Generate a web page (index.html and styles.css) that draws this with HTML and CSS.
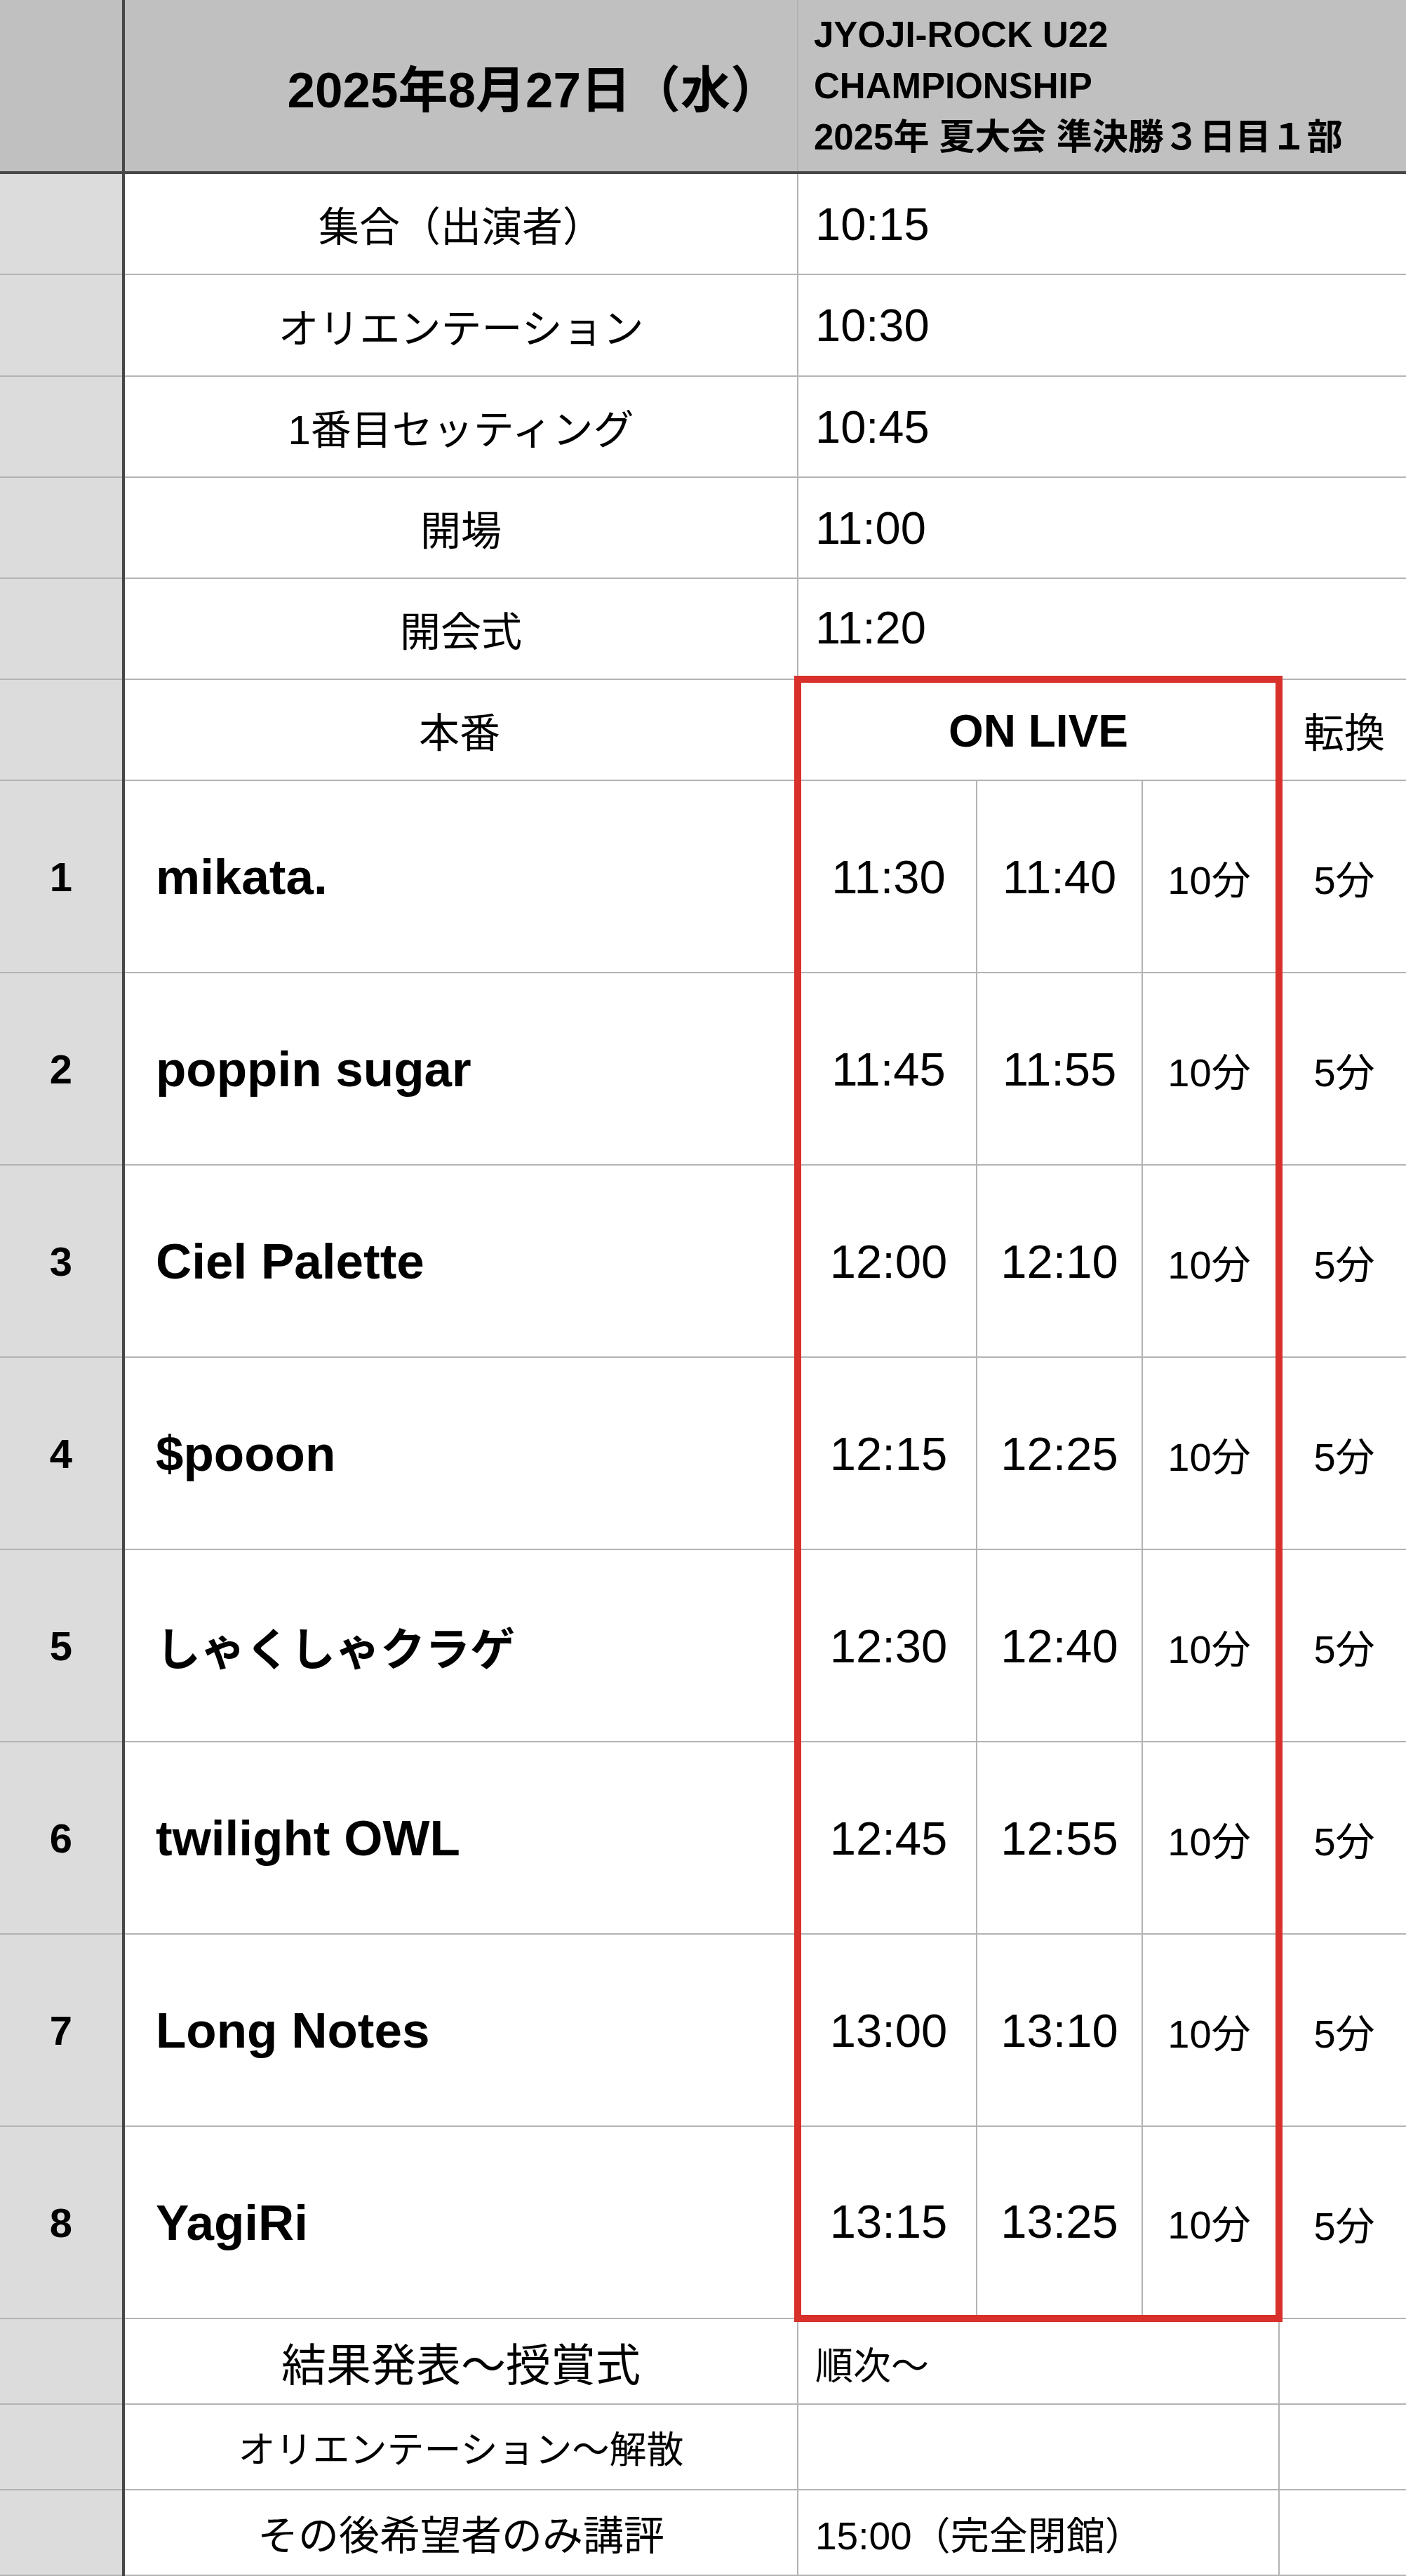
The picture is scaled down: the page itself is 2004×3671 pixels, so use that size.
FILE: index.html
```html
<!DOCTYPE html>
<html lang="ja">
<head>
  <meta charset="utf-8">
  <title>JYOJI-ROCK U22 CHAMPIONSHIP タイムテーブル</title>
  <link rel="stylesheet" href="styles.css">
</head>
<body>
  <table class="sheet">
    <colgroup>
      <col class="c-num">
      <col class="c-name">
      <col class="c-start">
      <col class="c-end">
      <col class="c-len">
      <col class="c-change">
    </colgroup>
    <thead>
      <tr class="head">
        <th class="num"></th>
        <th class="date">2025年8月27日（水）</th>
        <th class="title" colspan="4">JYOJI-ROCK U22<br>CHAMPIONSHIP<br>2025年 夏大会 準決勝３日目１部</th>
      </tr>
    </thead>
    <tbody>
      <tr class="step">
        <td class="num"></td>
        <td class="label">集合（出演者）</td>
        <td class="time" colspan="4">10:15</td>
      </tr>
      <tr class="step">
        <td class="num"></td>
        <td class="label">オリエンテーション</td>
        <td class="time" colspan="4">10:30</td>
      </tr>
      <tr class="step">
        <td class="num"></td>
        <td class="label">1番目セッティング</td>
        <td class="time" colspan="4">10:45</td>
      </tr>
      <tr class="step">
        <td class="num"></td>
        <td class="label">開場</td>
        <td class="time" colspan="4">11:00</td>
      </tr>
      <tr class="step">
        <td class="num"></td>
        <td class="label">開会式</td>
        <td class="time" colspan="4">11:20</td>
      </tr>
      <tr class="step">
        <td class="num"></td>
        <td class="label">本番</td>
        <td class="onlive" colspan="3">ON LIVE</td>
        <td class="change-head">転換</td>
      </tr>

      <tr class="act">
        <td class="num">1</td>
        <td class="band">mikata.</td>
        <td class="t start">11:30</td>
        <td class="t end">11:40</td>
        <td class="t len">10分</td>
        <td class="t change">5分</td>
      </tr>
      <tr class="act">
        <td class="num">2</td>
        <td class="band">poppin sugar</td>
        <td class="t start">11:45</td>
        <td class="t end">11:55</td>
        <td class="t len">10分</td>
        <td class="t change">5分</td>
      </tr>
      <tr class="act">
        <td class="num">3</td>
        <td class="band">Ciel Palette</td>
        <td class="t start">12:00</td>
        <td class="t end">12:10</td>
        <td class="t len">10分</td>
        <td class="t change">5分</td>
      </tr>
      <tr class="act">
        <td class="num">4</td>
        <td class="band">$pooon</td>
        <td class="t start">12:15</td>
        <td class="t end">12:25</td>
        <td class="t len">10分</td>
        <td class="t change">5分</td>
      </tr>
      <tr class="act">
        <td class="num">5</td>
        <td class="band jp">しゃくしゃクラゲ</td>
        <td class="t start">12:30</td>
        <td class="t end">12:40</td>
        <td class="t len">10分</td>
        <td class="t change">5分</td>
      </tr>
      <tr class="act">
        <td class="num">6</td>
        <td class="band">twilight OWL</td>
        <td class="t start">12:45</td>
        <td class="t end">12:55</td>
        <td class="t len">10分</td>
        <td class="t change">5分</td>
      </tr>
      <tr class="act">
        <td class="num">7</td>
        <td class="band">Long Notes</td>
        <td class="t start">13:00</td>
        <td class="t end">13:10</td>
        <td class="t len">10分</td>
        <td class="t change">5分</td>
      </tr>
      <tr class="act last">
        <td class="num">8</td>
        <td class="band">YagiRi</td>
        <td class="t start">13:15</td>
        <td class="t end">13:25</td>
        <td class="t len">10分</td>
        <td class="t change">5分</td>
      </tr>

      <tr class="tail">
        <td class="num"></td>
        <td class="label big">結果発表～授賞式</td>
        <td class="time small" colspan="3">順次～</td>
        <td></td>
      </tr>
      <tr class="tail">
        <td class="num"></td>
        <td class="label narrow">オリエンテーション～解散</td>
        <td class="time small" colspan="3"></td>
        <td></td>
      </tr>
      <tr class="tail">
        <td class="num"></td>
        <td class="label">その後希望者のみ講評</td>
        <td class="time smaller" colspan="3">15:00（完全閉館）</td>
        <td></td>
      </tr>
    </tbody>
  </table>
</body>
</html>
```

FILE: styles.css
```css
:root {
  --head-bg: #bfc0bf;
  --num-bg: #dcdcdc;
  --grid: #b3b3b3;
  --dark: #474747;
  --red: #d8302a;
  --text: #000;
}
* { box-sizing: border-box; margin: 0; padding: 0; }
body {
  font-family: "Liberation Sans", "Noto Sans CJK JP", sans-serif;
  color: var(--text);
  background: #fff;
}

/* spreadsheet grid */
.sheet {
  width: 2004px;
  table-layout: fixed;
  border-collapse: collapse;
}
.c-num { width: 176px; }
.c-name { width: 961px; }
.c-start { width: 255px; }
.c-end { width: 236px; }
.c-len { width: 195px; }
.c-change { width: 181px; }

th, td {
  border: 2px solid var(--grid);
  padding: 0 22px;
  vertical-align: middle;
  font-weight: 400;
  white-space: nowrap;
  overflow: hidden;
}
tr > :last-child { border-right: none; }
.num {
  border-left: none;
  border-right: 4px solid var(--dark);
  background: var(--num-bg);
  text-align: center;
  font-weight: 700;
  font-size: 58px;
}

/* header */
.head { height: 246px; }
.head th {
  background: var(--head-bg);
  border-top: none;
  border-bottom: 4px solid var(--dark);
  font-weight: 700;
}
.head .num { border-right: 4px solid var(--dark); }
.head .date {
  text-align: right;
  font-size: 71px;
  padding-right: 24px;
}
.head .title {
  text-align: left;
  font-size: 51px;
  line-height: 73px;
}

/* rows */
.step { height: 144px; }
.step:first-child, .step:nth-child(2) { height: 145px; }
.act { height: 274px; }
.tail { height: 122px; }

.label {
  text-align: center;
  font-size: 58px;
}
.label.big { font-size: 64px; }
.label.narrow { font-size: 53px; }
.time {
  text-align: left;
  font-size: 65px;
  padding-left: 24px;
}
.time.small { font-size: 54px; }
.time.smaller { font-size: 55px; }

.band {
  font-weight: 700;
  font-size: 71px;
  padding-left: 44px;
}
.band.jp { font-size: 64px; }
.t {
  text-align: center;
  font-size: 67px;
  padding: 0 4px;
}
.t.len, .t.change { font-size: 56px; }

/* ON LIVE block */
.onlive {
  text-align: center;
  font-weight: 700;
  font-size: 64px;
  border-top: 10px solid var(--red);
  border-left: 10px solid var(--red);
  border-right: 10px solid var(--red);
}
.change-head {
  text-align: center;
  font-size: 58px;
}
.act .start { border-left: 10px solid var(--red); }
.act .len { border-right: 10px solid var(--red); }
.act.last .start,
.act.last .end,
.act.last .len { border-bottom: 10px solid var(--red); }
```
